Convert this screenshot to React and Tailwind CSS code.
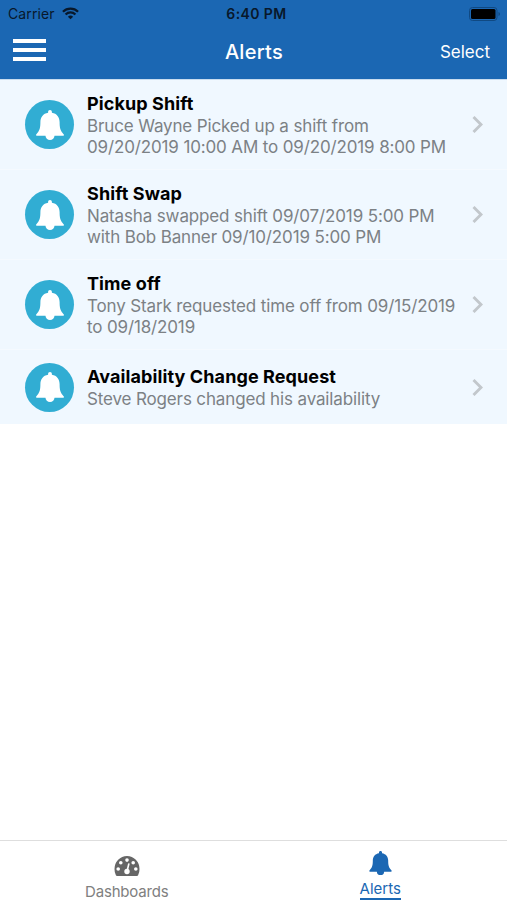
import React from 'react';

const alerts = [
  { id: 1, title: 'Pickup Shift', lines: ['Bruce Wayne Picked up a shift from', '09/20/2019 10:00 AM to 09/20/2019 8:00 PM'] },
  { id: 2, title: 'Shift Swap', lines: ['Natasha swapped shift 09/07/2019 5:00 PM', 'with Bob Banner 09/10/2019 5:00 PM'] },
  { id: 3, title: 'Time off', lines: ['Tony Stark requested time off from 09/15/2019', 'to 09/18/2019'] },
  { id: 4, title: 'Availability Change Request', lines: ['Steve Rogers changed his availability'] },
]

function Bell ({ className }) {
  return (
    <svg viewBox="0 0 28 30" className={className} fill="currentColor">
      <path d="M14 0c1.200 0 1.900.8 1.900 2v.7c5 .8 7.700 4.500 7.700 9.300 0 5.500.6 8.800 4.200 12.400.5.600.2 1.400-.6 1.400H.8c-.8 0-1.100-.8-.6-1.400C3.800 20.800 4.400 17.500 4.400 12c0-4.800 2.700-8.500 7.700-9.300V2c0-1.200.7-2 1.900-2z" />
      <path d="M9.500 25h9v.8a4.500 4.200 0 0 1-9 0z" />
    </svg>
  )
}

function Gauge () {
  return (
    <svg viewBox="0 0 26 20" className="ml-px h-5 w-[26px]">
      <path d="M3 20q-.7 0-1.100-.7A12.500 13 0 0 1 .5 13a12.500 13 0 0 1 25 0 12.500 13 0 0 1-1.400 6.300q-.4.700-1.100.7z" fill="#666" />
      <g fill="#fff">
        <circle cx="4.200" cy="13" r="1.800" />
        <circle cx="6.800" cy="6.800" r="1.800" />
        <circle cx="13" cy="4.100" r="1.800" />
        <circle cx="19.200" cy="6.800" r="1.800" />
        <circle cx="21.800" cy="13" r="1.800" />
        <circle cx="13" cy="15.500" r="2.700" />
      </g>
      <path d="M13 15.500 14.800 8" stroke="#fff" strokeWidth="1.600" strokeLinecap="round" />
    </svg>
  )
}

function StatusBar () {
  return (
    <div className="grid h-[27px] grid-cols-3 items-center pl-2 pr-[6px] text-[14px] text-[#08182b]">
      <div className="flex items-center gap-[7px]">
        <span className="tracking-[0.1px]">Carrier</span>
        <svg viewBox="0 0 18 13" className="h-[13px] w-[17px]" fill="none" stroke="currentColor" strokeWidth="2.400">
          <path d="M1 4.600a11.500 11.500 0 0 1 16 0M3.800 7.500a7.400 7.400 0 0 1 10.400 0" />
          <path d="M9 12.700 6.200 9.900a4 4 0 0 1 5.600 0z" fill="currentColor" stroke="none" />
        </svg>
      </div>
      <span className="pl-[4px] text-center font-semibold tracking-[0.4px]">6:40 PM</span>
      <svg viewBox="0 0 32 14" className="h-[14px] w-8 justify-self-end">
        <rect x=".5" y=".5" width="27.500" height="13" rx="3" fill="none" stroke="#104982" />
        <rect x="2" y="2" width="24.500" height="10" rx="1.500" fill="#000" />
        <path d="M29.500 5v4q1.500-.5 1.500-2t-1.500-2z" fill="#104982" />
      </svg>
    </div>
  )
}

function AlertRow ({ alert }) {
  return (
    <li className={`flex items-center bg-[#f0f8ff] pl-[25px] pr-6 ${alert.lines.length > 1 ? 'h-[90px] border-b border-[#f5faff]' : 'h-[74px]'}`}>
      <div className="flex size-[49px] shrink-0 items-center justify-center rounded-full bg-[#31add3] text-white">
        <Bell className="h-[30px] w-7" />
      </div>
      <div className="ml-[13px] flex-1 whitespace-nowrap">
        <h2 className="text-[18px] font-bold leading-6 tracking-[0.1px] text-black">{alert.title}</h2>
        {alert.lines.map((line) => (
          <p key={line} className="text-[17px] leading-[20.500px] tracking-[-0.14px] text-[#7c8185]">{line}</p>
        ))}
      </div>
      <svg viewBox="0 0 11 17" className="h-[17px] w-[11px] shrink-0" fill="none" stroke="#c2c7cc" strokeWidth="2.900">
        <path d="M1.500 1 9 8.500 1.500 16" />
      </svg>
    </li>
  )
}

export default function App () {
  return (
    <div className="flex h-[900px] w-[507px] flex-col overflow-hidden bg-white font-['Inter',sans-serif]">
      <header className="h-20 border-b border-[#c9dcef] bg-[#1b67b3]">
        <StatusBar />
        <div className="grid h-[50px] grid-cols-3 items-center pl-[13px] pr-[17px] text-white">
          <button className="mb-[5px] flex w-[33px] flex-col gap-[5px]">
            <span className="h-1 bg-white" />
            <span className="h-1 bg-white" />
            <span className="h-1 bg-white" />
          </button>
          <h1 className="pl-[5px] text-center text-[20px] font-medium tracking-[0.3px]">Alerts</h1>
          <button className="pt-px text-right text-[17px]">Select</button>
        </div>
      </header>
      <ul>
        {alerts.map((alert) => <AlertRow key={alert.id} alert={alert} />)}
      </ul>
      <nav className="mt-auto grid h-[60px] grid-cols-2 border-t border-[#dedede] text-[15px]">
        <button className="flex flex-col items-center pt-[15px] text-[#808080]">
          <Gauge />
          <span className="mt-[6px] leading-5 tracking-[-0.2px]">Dashboards</span>
        </button>
        <button className="flex flex-col items-center pt-[10px] text-[#1b67b3]">
          <Bell className="h-6 w-[23px]" />
          <span className="mt-[5px] border-b-2 border-[#1b67b3] leading-[18px]">Alerts</span>
        </button>
      </nav>
    </div>
  )
}
